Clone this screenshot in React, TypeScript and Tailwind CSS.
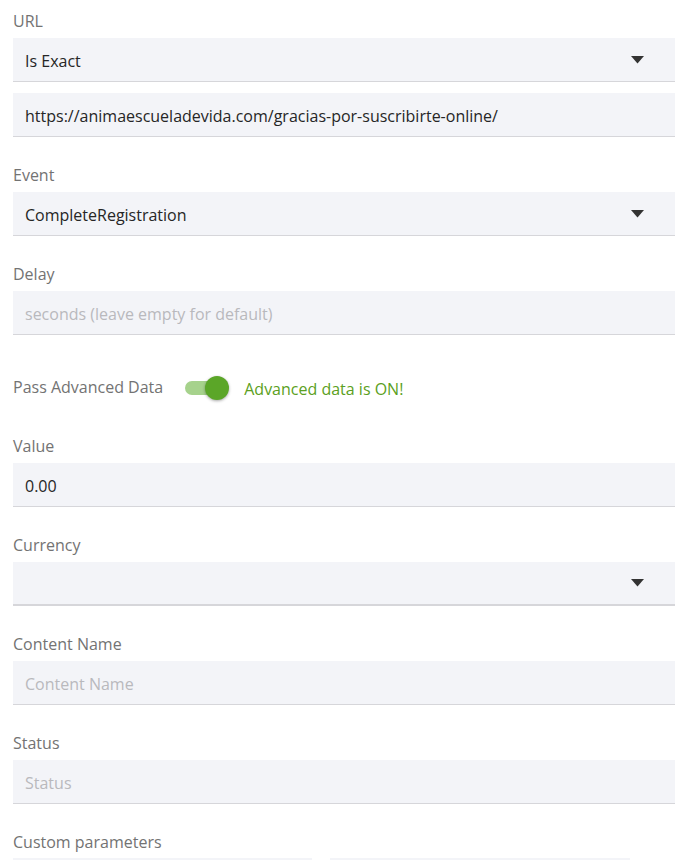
const labelCls = "block h-5 leading-5 text-base text-[#737373]";
const fieldCls =
  "flex items-center h-[44px] bg-[#f3f4f8] border-b border-[#d6d6da] px-3 text-base";

function Caret() {
  return (
    <svg width="13" height="8" viewBox="0 0 13 8" className="ml-auto mr-[19px]">
      <path d="M0 0 L13 0 L6.5 7.5 Z" fill="#333" />
    </svg>
  );
}

function Field({
  label,
  value,
  placeholder,
  select,
  thick,
}: {
  label: string;
  value?: string;
  placeholder?: string;
  select?: boolean;
  thick?: boolean;
}) {
  return (
    <div className="mt-[28px]">
      <label className={labelCls}>{label}</label>
      <div
        className={
          "mt-[7px] " +
          fieldCls +
          (thick ? " border-b-2 border-[#cacace]" : "")
        }
      >
        {value ? (
          <span className="text-[#262626] pt-[2px]">{value}</span>
        ) : (
          <span className="text-[#b9b9bd] pt-[2px]">{placeholder}</span>
        )}
        {select && <Caret />}
      </div>
    </div>
  );
}

export default function App() {
  return (
    <div
      className="w-[692px] h-[860px] overflow-hidden bg-white pl-[13px] pr-[17px] pt-[11px]"
      style={{ fontFamily: '"Open Sans", "Noto Sans", sans-serif' }}
    >
      <label className={labelCls}>URL</label>
      <div className={"mt-[7px] " + fieldCls}>
        <span className="text-[#262626] pt-[2px]">Is Exact</span>
        <Caret />
      </div>
      <div className={"mt-[11px] " + fieldCls}>
        <span className="text-[#262626] pt-[2px]">
          https://animaescueladevida.com/gracias-por-suscribirte-online/
        </span>
      </div>

      <Field label="Event" value="CompleteRegistration" select />
      <Field label="Delay" placeholder="seconds (leave empty for default)" />

      <div className="mt-[39px] h-7 flex items-center">
        <span className="text-base text-[#737373] -mt-[2px]">Pass Advanced Data</span>
        <div className="relative ml-[22px] w-[44px] h-7 flex items-center">
          <div className="w-[38px] h-[14px] rounded-full bg-[#a6d28c]" />
          <div className="absolute right-0 top-[2px] w-6 h-6 rounded-full bg-[#5ba628] shadow-[0_1px_3px_rgba(0,0,0,0.35)]" />
        </div>
        <span className="ml-[15px] text-base text-[#5b9f22] mt-[2px]">Advanced data is ON!</span>
      </div>

      <div className="pt-[6px]">
        <Field label="Value" value="0.00" />
      </div>
      <Field label="Currency" select thick />
      <Field label="Content Name" placeholder="Content Name" />
      <Field label="Status" placeholder="Status" />

      <div className="mt-[28px]">
        <label className={labelCls}>Custom parameters</label>
        <div className="mt-[6px] flex gap-[18px]">
          <div className="w-[299px] h-[44px] bg-[#f3f4f8]" />
          <div className="w-[300px] h-[44px] bg-[#f3f4f8]" />
        </div>
      </div>
    </div>
  );
}
